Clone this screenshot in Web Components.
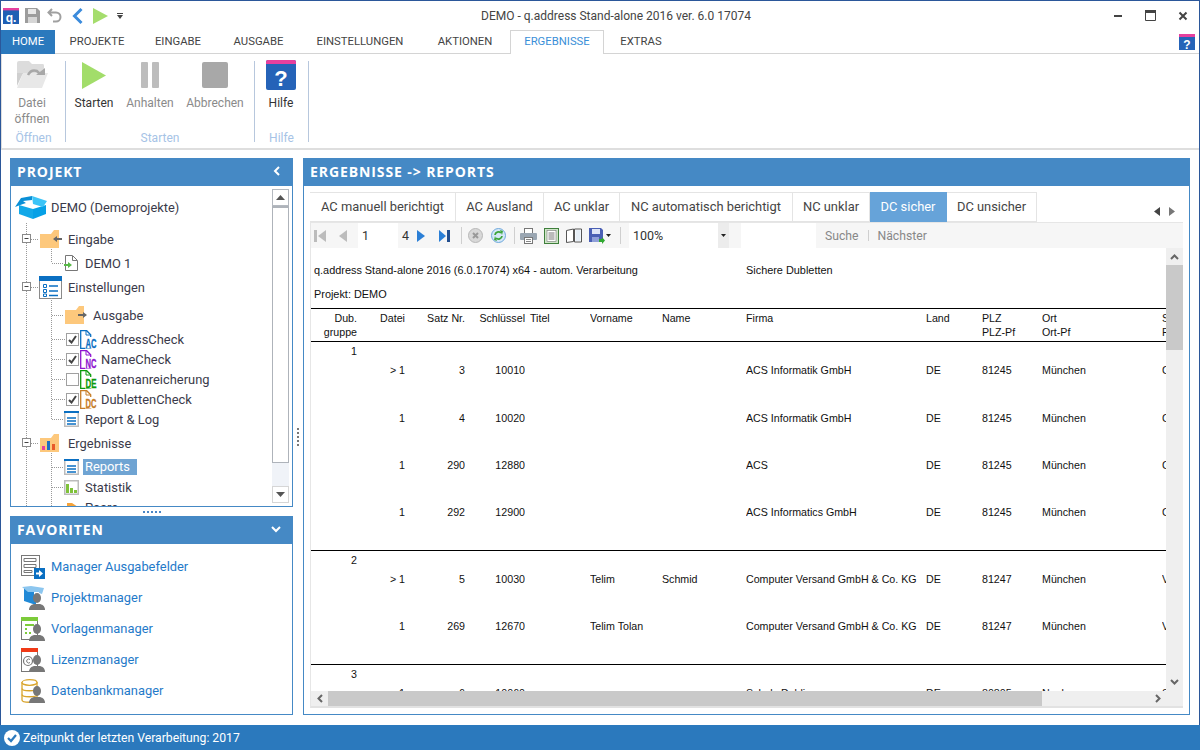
<!DOCTYPE html>
<html lang="de">
<head>
<meta charset="utf-8">
<title>DEMO - q.address</title>
<style>
html, body { margin: 0; padding: 0; background: #fff; }
body { width: 1200px; height: 750px; overflow: hidden; font-family: Roboto, "Liberation Sans", sans-serif; }
</style>
</head>
<body>
<q-window>
    <q-titlebar slot="top"></q-titlebar>
    <q-ribbon-tabs slot="top"></q-ribbon-tabs>
    <q-ribbon slot="top">
        <q-ribbon-group label="Öffnen" style="width:64px">
            <q-ribbon-btn icon="folderOpen" disabled style="width:60px">Datei<br>öffnen</q-ribbon-btn>
        </q-ribbon-group>
        <q-ribbon-group label="Starten" style="width:189px">
            <q-ribbon-btn icon="playBig" style="width:56px">Starten</q-ribbon-btn>
            <q-ribbon-btn icon="pauseBig" disabled style="width:56px">Anhalten</q-ribbon-btn>
            <q-ribbon-btn icon="stopBig" disabled style="width:74px">Abbrechen</q-ribbon-btn>
        </q-ribbon-group>
        <q-ribbon-group label="Hilfe" style="width:54px">
            <q-ribbon-btn icon="helpBig" style="width:52px">Hilfe</q-ribbon-btn>
        </q-ribbon-group>
    </q-ribbon>
    <q-workspace>
        <q-panel slot="project" heading="PROJEKT" arrow="left" style="height:349px">
            <q-tree>
                <q-tree-row icon="box" style="--x:4px;--mt:11px;--tw:36px">DEMO (Demoprojekte)</q-tree-row>
                <q-tree-row icon="folderIn" style="--x:29px;--mt:12px;--tw:28px">Eingabe</q-tree-row>
                <q-tree-row icon="docIn" style="--x:54px;--mt:4px;--tw:20px">DEMO 1</q-tree-row>
                <q-tree-row icon="settings" style="--x:28px;--mt:4px;--tw:29px">Einstellungen</q-tree-row>
                <q-tree-row icon="folderOut" style="--x:54px;--mt:8px;--tw:28px">Ausgabe</q-tree-row>
                <q-tree-row check="on" icon="docAC" style="--x:55px;--mt:4px;--tw:21px">AddressCheck</q-tree-row>
                <q-tree-row check="on" icon="docNC" style="--x:55px;--tw:21px">NameCheck</q-tree-row>
                <q-tree-row check="off" icon="docDE" style="--x:55px;--tw:21px">Datenanreicherung</q-tree-row>
                <q-tree-row check="on" icon="docDC" style="--x:55px;--tw:21px">DublettenCheck</q-tree-row>
                <q-tree-row icon="list" style="--x:53px;--tw:21px">Report &amp; Log</q-tree-row>
                <q-tree-row icon="folderChart" style="--x:29px;--mt:4px;--tw:28px">Ergebnisse</q-tree-row>
                <q-tree-row icon="list" selected style="--x:53px;--mt:4px;--tw:19px">Reports</q-tree-row>
                <q-tree-row icon="chart" style="--x:53px;--tw:21px">Statistik</q-tree-row>
                <q-tree-row icon="pie" style="--x:53px;--tw:21px">Paare</q-tree-row>
            </q-tree>
        </q-panel>
        <q-panel slot="favorites" heading="FAVORITEN" arrow="down" style="height:199px">
            <q-favorites>
                <q-fav-row icon="favFields">Manager Ausgabefelder</q-fav-row>
                <q-fav-row icon="favProject">Projektmanager</q-fav-row>
                <q-fav-row icon="favTemplate">Vorlagenmanager</q-fav-row>
                <q-fav-row icon="favLicense">Lizenzmanager</q-fav-row>
                <q-fav-row icon="favDb">Datenbankmanager</q-fav-row>
            </q-favorites>
        </q-panel>
        <q-panel slot="results" heading="ERGEBNISSE -&gt; REPORTS" style="height:557px">
            <q-report-view></q-report-view>
        </q-panel>
    </q-workspace>
    <q-statusbar slot="bottom">Zeitpunkt der letzten Verarbeitung: 2017</q-statusbar>
</q-window>

<script>
const person = (x, y) => `<g fill="#777" transform="translate(${x} ${y})"><ellipse cx="8" cy="5" rx="4" ry="5"/><path d="M0 17c0-4 3-6 6-6h4c3 0 6 2 6 6z"/></g>`;
const docShape = c => `<path fill="#fff" stroke="${c}" stroke-width="1.3" d="M.7.7h6l4 4v13.6H.7z"/><path fill="none" stroke="${c}" d="M6 1v4h4"/>`;
const docLabel = (c, t) => `<rect x="5" y="7" width="11.500" height="11.500" fill="#fff"/><text x="5.5" y="18" font-family="Liberation Sans" font-weight="700" font-size="12" fill="${c}" stroke="${c}" stroke-width=".3" textLength="11" lengthAdjust="spacingAndGlyphs">${t}</text>`;
const listLines = '<path stroke="#0a6fc2" stroke-width="1.4" d="M3 7h9M3 10h9M3 13h9"/>';

const ICONS = {
    logo: [16, 16, '<rect width="16" height="16" fill="#1f5fb4"/><rect width="16" height="2.4" fill="#e6409e"/><text x="8" y="13.5" text-anchor="middle" font-family="Liberation Sans" font-weight="700" font-size="12" fill="#fff">q.</text>'],
    save: [15, 15, '<path fill="#9c9c9c" d="M0 0h12l3 3v12H0z"/><rect x="3" y="1" width="8" height="5" fill="#e8e8e8"/><rect x="3" y="9" width="9" height="6" fill="#d6d6d6"/>'],
    undo: [15, 15, '<path fill="none" stroke="#a0a0a0" stroke-width="2" d="M5 1 1.500 4.500 5 8M2 4.500h7a4.500 4.500 0 0 1 0 9H6"/>'],
    back: [11, 16, '<path fill="none" stroke="#3b8bdc" stroke-width="3" d="M9.500 1 2.500 8l7 7"/>'],
    playSmall: [15, 16, '<path fill="#a5dd6d" d="M0 0l15 8L0 16z"/>'],
    qatMore: [6, 6, '<path fill="#444" d="M0 0h6v1H0zM0 2h6L3 6z"/>'],
    min: [8, 2, '<rect width="8" height="2" fill="#444"/>'],
    max: [11, 11, '<path fill="none" stroke="#444" d="M.5.500h10v10H.5z"/><rect width="11" height="3" fill="#444"/>'],
    close: [8, 8, '<path stroke="#444" stroke-width="2" d="M.5.500l7 7M7.500.500l-7 7"/>'],
    helpSmall: [16, 16, '<rect width="16" height="16" fill="#2563b8"/><rect width="16" height="3" fill="#e6409e"/><text x="8" y="14.500" text-anchor="middle" font-family="Liberation Sans" font-weight="700" font-size="12" fill="#fff">?</text>'],
    folderOpen: [32, 28, '<path fill="#dcdcdc" d="M1 2q0-2 2-2h10l3 3h11q1 0 1 2v8H1z"/><path fill="#e8e8e8" d="M7 12h25l-6 15H1z"/><path fill="#cfcfcf" d="M1 25 7 12H1z"/><path fill="none" stroke="#a8a8a8" stroke-width="2.500" d="M12 14q3-6 9-4l3 3"/><path fill="#a8a8a8" d="M20 14h9V7z"/>'],
    playBig: [24, 27, '<path fill="#a2dd6a" d="M0 0l24 13.500L0 27z"/>'],
    pauseBig: [18, 26, '<rect width="7" height="26" rx="1" fill="#bdbdbd"/><rect x="11" width="7" height="26" rx="1" fill="#bdbdbd"/>'],
    stopBig: [26, 26, '<rect width="26" height="26" rx="2" fill="#a8a8a8"/>'],
    helpBig: [30, 30, '<rect width="30" height="30" rx="2" fill="#2563b8"/><path fill="#e6409e" d="M2 0h26q2 0 2 2v2H0V2q0-2 2-2z"/><text x="15" y="26" text-anchor="middle" font-family="Liberation Sans" font-weight="700" font-size="22" fill="#fff">?</text>'],
    chevL: [8, 10, '<path fill="none" stroke="#fff" stroke-width="2" d="M6 1 2 5l4 4"/>'],
    chevD: [10, 8, '<path fill="none" stroke="#fff" stroke-width="2" d="M1 2l4 4 4-4"/>'],
    box: [32, 23, '<path fill="#0a8fd6" d="M0 11 6 2l11-2v5L8 8z"/><path fill="#fff" d="M8 5l9-1 12 4-11 4z"/><path fill="#12a8e8" d="M4 9l14 4v10L4 18z"/><path fill="#06a0e6" d="M18 13l13-4v9l-13 5z"/><path fill="#3cc4f7" d="M17 0l15 5-4 6-10-3z"/>'],
    folderIn: [23, 18, '<path fill="#fdc87c" d="M0 4h11l3-4h5v18H0z"/><path fill="#666" d="M13 9l4-3v2h5v2h-5v2z"/>'],
    folderOut: [23, 18, '<path fill="#fdc87c" d="M0 4h11l3-4h5v18H0z"/><path fill="#666" d="M22 9l-4-3v2h-5v2h5v2z"/>'],
    folderChart: [20, 18, '<path fill="#fdc87c" d="M0 4h11l3-4h5v18H0z"/><rect x="2" y="12" width="3" height="4" fill="#e8409e"/><rect x="7" y="7" width="3" height="9" fill="#1f6fc4"/><rect x="12" y="10" width="3" height="6" fill="#e85a2a"/>'],
    docIn: [13, 16, '<path fill="#fff" stroke="#777" d="M.5.500h7l5 5v10H.5z"/><path fill="none" stroke="#777" d="M7.500 1v4.500H12"/><path fill="#58b947" d="M-1 9h4V7l4 3-4 3v-2h-4z"/>'],
    settings: [23, 23, '<rect x=".5" y=".5" width="22" height="22" fill="#fff" stroke="#8a8a8a"/><rect width="23" height="5" fill="#0a6fc2"/><path fill="none" stroke="#0a6fc2" d="M4.500 8.500h3v3h-3zM4.500 13.500h3v3h-3zM4.500 18h3v2.500h-3z"/><path stroke="#0a6fc2" stroke-width="1.300" d="M10 10h9M10 15h9M10 19.500h9"/>'],
    docAC: [17, 19, docShape('#0a6fc2') + docLabel('#0a6fc2', 'AC')],
    docNC: [17, 19, docShape('#8f14cf') + docLabel('#8f14cf', 'NC')],
    docDE: [17, 19, docShape('#0b9a0b') + docLabel('#0b9a0b', 'DE')],
    docDC: [17, 19, docShape('#c77d27') + docLabel('#c77d27', 'DC')],
    list: [15, 16, '<rect x=".75" y=".75" width="13.500" height="14.500" fill="#fff" stroke="#bcbcbc" stroke-width="1.500"/><rect width="15" height="2" fill="#0a6fc2"/>' + listLines],
    chart: [15, 15, '<rect x=".75" y=".75" width="13.500" height="13.500" fill="#fff" stroke="#bcbcbc" stroke-width="1.500"/><rect x="2" y="4" width="3" height="9" fill="#7fc23a"/><rect x="6" y="8" width="3" height="5" fill="#7fc23a"/><rect x="10" y="10" width="3" height="3" fill="#7fc23a"/>'],
    pie: [15, 15, '<path fill="#1f7fd0" d="M0 15A7 7 0 0 1 7 8V4Q1 5 0 15z"/><path fill="#f5a33a" d="M3 3h5l6 4H3z"/>'],
    favFields: [24, 24, '<rect x=".5" y=".5" width="18" height="20" fill="#fff" stroke="#777"/><path fill="none" stroke="#777" d="M3 3.500h12v3H3zM3 9.500h12v3H3zM3 15.500h8v2H3z"/><rect x="13" y="13" width="11" height="11" fill="#0a6fc2"/><path fill="#fff" d="M15 17.500h3V15l4 3.500-4 3.500v-2.500h-3z"/>'],
    favProject: [24, 24, '<path fill="#2189d6" d="M3 2h12v17L3 15z"/><path fill="#8cc6ef" d="M1 1l9-1 13 2-2 6-6-2-8 0z"/><path fill="#fff" d="M13 6h5v6h-5z"/>' + person(8, 7)],
    favTemplate: [24, 24, '<rect x=".5" y=".5" width="16" height="22" fill="#fff" stroke="#777"/><rect width="17" height="4" fill="#7ccb3a"/><path fill="#7ccb3a" d="M4 7h9v2H4zM4 11h2v2H4zM4 15h2v2H4zM8 15h2v2H8z"/>' + person(8, 7)],
    favLicense: [24, 24, '<rect x=".5" y=".5" width="16" height="23" fill="#fff" stroke="#777"/><rect width="17" height="4" fill="#f03a17"/><circle cx="7" cy="13" r="4.500" fill="none" stroke="#777" stroke-width="1.200"/><path fill="none" stroke="#777" d="M9 11.500a2 2 0 1 0 0 3"/>' + person(8, 7)],
    favDb: [24, 24, '<g fill="#fff" stroke="#d9a52e" stroke-width="1.300"><path d="M1 3v18c0 3 15 3 15 0V3"/><ellipse cx="8.500" cy="3.500" rx="7.500" ry="2.800"/><path fill="none" d="M1 9.500c0 3 15 3 15 0M1 15.500c0 3 15 3 15 0"/></g>' + person(8, 7)],
    statusOk: [16, 16, '<circle cx="8" cy="8" r="8" fill="#fff"/><path fill="none" stroke="#2b79bd" stroke-width="2.200" d="M4 8l3 3 5-6"/>'],
    first: [12, 12, '<rect width="3" height="12" fill="#bcbcbc"/><path fill="#bcbcbc" d="M12 0v12L4 6z"/>'],
    prev: [8, 12, '<path fill="#bcbcbc" d="M8 0v12L0 6z"/>'],
    next: [8, 12, '<path fill="#2b7fd6" d="M0 0v12l8-6z"/>'],
    last: [11, 12, '<path fill="#2b7fd6" d="M0 0v12l7-6z"/><rect x="8" width="3" height="12" fill="#234f8f"/>'],
    stopRound: [15, 15, '<circle cx="7.500" cy="7.500" r="7" fill="#d8d8d8" stroke="#b8b8b8"/><path stroke="#999" stroke-width="2" d="M5 5l5 5M10 5l-5 5"/>'],
    refresh: [15, 15, '<circle cx="7.500" cy="7.500" r="7" fill="#d5e8f8" stroke="#6fa8dc"/><path fill="none" stroke="#3ea53a" stroke-width="1.800" d="M4 7a3.500 3.500 0 0 1 6-2M11 8a3.500 3.500 0 0 1-6 2"/><path fill="#3ea53a" d="M9 2l3 1-1 4zM6 13l-3-1 1-4z"/>'],
    print: [17, 16, '<rect x="4.500" y=".5" width="8" height="6" fill="#fff" stroke="#777"/><rect y="5" width="17" height="7" rx="1" fill="#9aa6b2"/><rect x="4.500" y="9.500" width="8" height="6" fill="#fff" stroke="#777"/><path stroke="#888" d="M6 11.500h5M6 13.500h5"/>'],
    page: [15, 16, '<rect x=".5" y=".5" width="14" height="15" fill="#cfe6c8" stroke="#3f7f3c"/><rect x="3" y="2.500" width="9" height="11" fill="#fff" stroke="#777" stroke-width=".6"/><path stroke="#777" d="M4.500 5h6M4.500 7h6M4.500 9h6M4.500 11h6"/>'],
    layout: [16, 15, '<path fill="#fff" stroke="#555" d="M.5 2.500 7.500 1v12.500l-7 1zM8.500 1h7v13h-7z"/><path fill="#e6eef6" d="M9.500 2h5v11h-5z"/>'],
    disk: [16, 16, '<path fill="#4a5fb4" d="M0 0h12l2 2v12H0z"/><rect x="3" y="1" width="8" height="5" fill="#dfe6f7"/><rect x="3" y="9" width="7" height="5" fill="#8f9fd8"/><path fill="#2fa82f" d="M10 11h3V9l3 3.500-3 3.500v-2h-3z"/>'],
    drop: [5, 3, '<path fill="#222" d="M0 0h5L2.500 3z"/>'],
    navL: [6, 9, '<path fill="#444" d="M6 0v9L0 4.500z"/>'],
    navR: [6, 9, '<path fill="#777" d="M0 0v9l6-4.500z"/>'],
    sbUp: [9, 5, '<path fill="#555" d="M0 5l4.500-5L9 5z"/>'],
    sbDown: [9, 5, '<path fill="#555" d="M0 0l4.500 5L9 0z"/>'],
    chevUp: [9, 6, '<path fill="none" stroke="#666" stroke-width="2" d="M1 5l3.500-3.500L8 5"/>'],
    chevDown: [9, 6, '<path fill="none" stroke="#666" stroke-width="2" d="M1 1l3.500 3.500L8 1"/>'],
    chevLeft: [6, 9, '<path fill="none" stroke="#666" stroke-width="2" d="M5 1 1.500 4.500 5 8"/>'],
    chevRight: [6, 9, '<path fill="none" stroke="#666" stroke-width="2" d="M1 1l3.500 3.500L1 8"/>']
};

class QIcon extends HTMLElement {
    connectedCallback(){
        const [w, h, body] = ICONS[this.getAttribute('name')];
        const root = this.shadowRoot || this.attachShadow({mode: 'open'});
        root.innerHTML = `<style>:host{display:block;flex:none;width:${w}px;height:${h}px}svg{display:block;overflow:visible}</style>
        <svg width="${w}" height="${h}" viewBox="0 0 ${w} ${h}">${body}</svg>`;
    }
}
customElements.define('q-icon', QIcon);

class QWindow extends HTMLElement {
    constructor(){
        super();
        this.attachShadow({mode: 'open'}).innerHTML = `
        <style>
        :host{display:flex;flex-direction:column;width:1200px;height:750px;box-sizing:border-box;
              font-family:Roboto,"Liberation Sans",sans-serif;color:#333;background:#fff}
        .frame{flex:1;display:flex;flex-direction:column;border:1px solid #2b579a;border-bottom:0;min-height:0}
        </style>
        <div class="frame"><slot name="top"></slot><slot></slot></div>
        <slot name="bottom"></slot>`;
    }
}
customElements.define('q-window', QWindow);

class QTitlebar extends HTMLElement {
    constructor(){
        super();
        this.attachShadow({mode: 'open'}).innerHTML = `
        <style>
        :host{display:flex;align-items:center;height:29px;position:relative;font-size:12px;color:#444}
        .qat{display:flex;align-items:center;padding-left:2px}
        .title{position:absolute;left:0;right:0;text-align:center;padding-left:32px;box-sizing:border-box;pointer-events:none}
        .ctl{margin-left:auto;display:flex;align-items:center}
        </style>
        <div class="qat">
            <q-icon name="logo"></q-icon>
            <q-icon name="save" style="margin-left:6px"></q-icon>
            <q-icon name="undo" style="margin-left:7px"></q-icon>
            <q-icon name="back" style="margin-left:10px"></q-icon>
            <q-icon name="playSmall" style="margin-left:10px"></q-icon>
            <q-icon name="qatMore" style="margin-left:9px"></q-icon>
        </div>
        <div class="title">DEMO - q.address Stand-alone 2016 ver. 6.0 17074</div>
        <div class="ctl">
            <q-icon name="min"></q-icon>
            <q-icon name="max" style="margin-left:23px"></q-icon>
            <q-icon name="close" style="margin-left:23px;margin-right:12px"></q-icon>
        </div>`;
    }
}
customElements.define('q-titlebar', QTitlebar);

class QRibbonTabs extends HTMLElement {
    constructor(){
        super();
        const tabs = [['HOME',54,'home'],['PROJEKTE',84],['EINGABE',78],['AUSGABE',83],['EINSTELLUNGEN',120],['AKTIONEN',90],['ERGEBNISSE',94,'active'],['EXTRAS',74]];
        this.attachShadow({mode: 'open'}).innerHTML = `
        <style>
        :host{display:flex;height:24px;font-size:11.300px;color:#444;border-bottom:1px solid #d4d4d4;box-sizing:border-box;position:relative}
        .tab{box-sizing:border-box;height:24px;line-height:24px;text-align:center;flex:none}
        .home{background:#2b79bd;color:#fff}
        .active{color:#3b8fd8;background:#fff;border:1px solid #d4d4d4;border-bottom:0;line-height:22px}
        q-icon{position:absolute;right:4px;top:4px}
        </style>
        ${tabs.map(t => `<div class="tab ${t[2]||''}" style="width:${t[1]}px">${t[0]}</div>`).join('')}
        <q-icon name="helpSmall"></q-icon>`;
    }
}
customElements.define('q-ribbon-tabs', QRibbonTabs);

class QRibbon extends HTMLElement {
    constructor(){
        super();
        this.attachShadow({mode: 'open'}).innerHTML = `
        <style>
        :host{display:flex;height:96px;box-sizing:border-box;border-bottom:2px solid #dedede;border-left:1px solid #dedede;padding-top:7px}
        </style><slot></slot>`;
    }
}
customElements.define('q-ribbon', QRibbon);

class QRibbonGroup extends HTMLElement {
    constructor(){
        super();
        this.attachShadow({mode: 'open'}).innerHTML = `
        <style>
        :host{display:flex;flex-direction:column;height:81px;box-sizing:border-box;border-right:1px solid #b7c7dd;flex:none}
        .btns{flex:1;display:flex;min-height:0}
        .label{height:16px;line-height:16px;text-align:center;font-size:12px;color:#a6c3e6;margin-bottom:-4px}
        </style>
        <div class="btns"><slot></slot></div>
        <div class="label"></div>`;
        this.shadowRoot.querySelector('.label').textContent = this.getAttribute('label');
    }
}
customElements.define('q-ribbon-group', QRibbonGroup);

class QRibbonBtn extends HTMLElement {
    connectedCallback(){
        if(this.shadowRoot) return;
        this.attachShadow({mode: 'open'}).innerHTML = `
        <style>
        :host{display:flex;flex-direction:column;align-items:center;flex:none;font-size:12px;line-height:16px;text-align:center;color:#333}
        :host([disabled]){color:#8a8a8a}
        .ic{height:30px;display:flex;align-items:center;justify-content:center;margin:-1px 0 5px}
        </style>
        <div class="ic"><q-icon name="${this.getAttribute('icon')}"></q-icon></div>
        <div><slot></slot></div>`;
    }
}
customElements.define('q-ribbon-btn', QRibbonBtn);

class QWorkspace extends HTMLElement {
    constructor(){
        super();
        this.attachShadow({mode: 'open'}).innerHTML = `
        <style>
        :host{flex:1;display:grid;grid-template-columns:283px 10px 887px;grid-template-rows:349px 9px 199px;
              padding:8px 0 0 9px;min-height:0;box-sizing:border-box}
        ::slotted([slot=project]){grid-column:1;grid-row:1}
        ::slotted([slot=favorites]){grid-column:1;grid-row:3}
        ::slotted([slot=results]){grid-column:3;grid-row:1 / 4}
        .hdots{grid-column:1;grid-row:2;display:flex;gap:2px;justify-content:center;align-items:center}
        .hdots i{width:2px;height:2px;background:#4a86c5;display:block}
        .vdots{grid-column:2;grid-row:1 / 4;display:flex;flex-direction:column;gap:2px;align-items:center;justify-content:flex-start;padding-top:270px}
        .vdots i{width:2px;height:2px;background:#777;display:block}
        </style>
        <slot name="project"></slot>
        <div class="hdots"><i></i><i></i><i></i><i></i><i></i></div>
        <slot name="favorites"></slot>
        <div class="vdots"><i></i><i></i><i></i><i></i><i></i></div>
        <slot name="results"></slot>`;
    }
}
customElements.define('q-workspace', QWorkspace);

class QPanel extends HTMLElement {
    connectedCallback(){
        if(this.shadowRoot) return;
        const arrow = this.getAttribute('arrow');
        const ic = arrow === 'left' ? 'chevL' : arrow === 'down' ? 'chevD' : '';
        this.attachShadow({mode: 'open'}).innerHTML = `
        <style>
        :host{display:flex;flex-direction:column;box-sizing:border-box;border:1px solid #4589c5;min-height:0}
        .head{height:27px;flex:none;box-sizing:border-box;padding:0 11px 3px 6px;background:#4589c5;color:#fff;font-family:"Open Sans",sans-serif;font-weight:700;font-size:14px;letter-spacing:.9px;display:flex;align-items:center;justify-content:space-between}
        .body{flex:1;min-height:0;display:flex;flex-direction:column}
        </style>
        <div class="head"><span>${this.getAttribute('heading').replace('>','&gt;')}</span>${ic ? `<q-icon name="${ic}"></q-icon>` : ''}</div>
        <div class="body"><slot></slot></div>`;
    }
}
customElements.define('q-panel', QPanel);

class QTree extends HTMLElement {
    constructor(){
        super();
        const v = (x, a, b) => `<path d="M${x}.5 ${a}V${b}"/>`;
        const h = (y, a, b) => `<path d="M${a} ${y}.5H${b}"/>`;
        const box = y => `<rect x="11.500" y="${y-4.5}" width="8" height="8" fill="#fff" stroke="#8a8a8a" stroke-dasharray="none"/><path stroke="#444" stroke-dasharray="none" d="M13.500 ${y-.5}h4"/>`;
        this.attachShadow({mode: 'open'}).innerHTML = `
        <style>
        :host{flex:1;display:flex;position:relative;min-height:0;overflow:hidden}
        .rows{flex:1;display:flex;flex-direction:column;min-width:0;overflow:hidden}
        .lines{position:absolute;left:0;top:1px;pointer-events:none}
        .scroll{position:absolute;left:261px;top:3px;width:17px;height:314px;display:flex;flex-direction:column;background:#f0f3f8}
        .btn{height:17px;flex:none;box-sizing:border-box;border:1px solid #b4b9c0;background:#fff;display:flex;align-items:center;justify-content:center}
        .btn.down{border-color:#d6d6d6;margin-top:auto}
        .thumb{height:257px;box-sizing:border-box;border:1px solid #aeb3ba;border-top-width:2px;background:#fff}
        </style>
        <div class="rows"><slot></slot></div>
        <svg class="lines" width="60" height="320" fill="none" stroke="#999" stroke-dasharray="1 1">
            <!-- coordinates are relative to the tree's top left corner -->
            ${v(15, 36, 320)}
            ${v(40, 62, 76)}${h(76, 41, 53)}
            ${v(40, 111, 232)}${h(128, 41, 53)}
            ${h(152, 41, 54)}${h(172, 41, 54)}${h(192, 41, 54)}${h(212, 41, 54)}${h(232, 41, 52)}
            ${v(40, 266, 320)}${h(280, 41, 52)}${h(300, 41, 52)}
            ${h(52, 20, 28)}${h(100, 20, 27)}${h(256, 20, 28)}
            ${box(52)}${box(100)}${box(256)}
        </svg>
        <div class="scroll">
            <div class="btn"><q-icon name="sbUp"></q-icon></div>
            <div class="thumb"></div>
            <div class="btn down"><q-icon name="sbDown"></q-icon></div>
        </div>`;
    }
}
customElements.define('q-tree', QTree);

class QTreeRow extends HTMLElement {
    connectedCallback(){
        if(this.shadowRoot) return;
        const chk = this.getAttribute('check');
        const box = chk ? `<span class="chk">${chk === 'on' ? '<svg width="9" height="9" viewBox="0 0 9 9"><path fill="none" stroke="#444" stroke-width="2" d="M1 5l2.500 2.500L8 1"/></svg>' : ''}</span>` : '';
        this.attachShadow({mode: 'open'}).innerHTML = `
        <style>
        :host{display:flex;align-items:center;flex:none;height:20px;margin-top:var(--mt,0);padding-left:var(--x,0);font-size:12.900px;color:#3a3a4a;white-space:nowrap}
        .ic{flex:none;display:flex;align-items:center;width:var(--tw);height:20px}
        .chk{flex:none;box-sizing:border-box;width:13px;height:13px;border:1px solid #a0a0a0;display:flex;align-items:center;justify-content:center;margin-right:1px;background:#fff}
        :host([selected]) .t{background:#6fa4d3;color:#fff;padding:0 7px 0 2px;line-height:16px}
        </style>
        ${box}<span class="ic"><q-icon name="${this.getAttribute('icon')}"></q-icon></span><span class="t"><slot></slot></span>`;
    }
}
customElements.define('q-tree-row', QTreeRow);

class QFavorites extends HTMLElement {
    constructor(){
        super();
        this.attachShadow({mode: 'open'}).innerHTML = `
        <style>:host{display:flex;flex-direction:column;padding:7px 0 0 10px}</style><slot></slot>`;
    }
}
customElements.define('q-favorites', QFavorites);

class QFavRow extends HTMLElement {
    connectedCallback(){
        if(this.shadowRoot) return;
        this.attachShadow({mode: 'open'}).innerHTML = `
        <style>
        :host{display:flex;align-items:center;height:31px;font-size:12.900px;color:#1f7ac9}
        q-icon{margin-right:6px}
        </style>
        <q-icon name="${this.getAttribute('icon')}"></q-icon><slot></slot>`;
    }
}
customElements.define('q-fav-row', QFavRow);

class QReportTabs extends HTMLElement {
    constructor(){
        super();
        const tabs = [['AC manuell berichtigt',146],['AC Ausland',88],['AC unklar',76],['NC automatisch berichtigt',173],['NC unklar',77],['DC sicher',77,'on'],['DC unsicher',90]];
        this.attachShadow({mode: 'open'}).innerHTML = `
        <style>
        :host{display:flex;height:30px;flex:none;font-size:12.900px;color:#444}
        .tab{flex:none;box-sizing:border-box;text-align:center;line-height:28px;border:1px solid #e4e4e4;border-left:0;background:#fff}
        .tab:first-child{border-left:1px solid #e4e4e4}
        .on{background:#66a3d9;color:#fff;border-color:#66a3d9}
        .nav{margin-left:auto;display:flex;align-items:center;gap:9px;padding:8px 8px 0 0}
        </style>
        ${tabs.map(t => `<div class="tab ${t[2]||''}" style="width:${t[1]}px">${t[0]}</div>`).join('')}
        <div class="nav"><q-icon name="navL"></q-icon><q-icon name="navR"></q-icon></div>`;
    }
}
customElements.define('q-report-tabs', QReportTabs);

class QReportToolbar extends HTMLElement {
    constructor(){
        super();
        const ic = (n, ml) => `<q-icon name="${n}" style="margin-left:${ml}px"></q-icon>`;
        const sep = ml => `<i class="sep" style="margin-left:${ml}px"></i>`;
        this.attachShadow({mode: 'open'}).innerHTML = `
        <style>
        :host{display:flex;align-items:center;height:26px;flex:none;background:#f6f6f6;font-size:12.500px;color:#333;border-top:1px solid #e6e6e6;box-sizing:border-box}
        .sep{display:block;width:1px;height:17px;background:#cfcfcf;flex:none}
        .input{flex:none;background:#fff;height:25px;line-height:25px;box-sizing:border-box}
        .combo{display:flex;justify-content:space-between;align-items:center}
        .dd{width:11px;height:25px;background:#ececec;display:flex;align-items:center;justify-content:center}
        .txt{color:#888;flex:none;font-size:12.200px}
        .num{flex:none;width:8px}
        </style>
        ${ic('first',3)}${ic('prev',13)}
        <div class="input" style="margin-left:11px;width:40px;padding-left:4px">1</div>
        <span class="num" style="margin-left:4px">4</span>
        ${ic('next',7)}${ic('last',14)}${sep(11)}
        ${ic('stopRound',6)}${ic('refresh',8)}${sep(8)}
        ${ic('print',5)}${ic('page',7)}${ic('layout',7)}${ic('disk',7)}${ic('drop',1)}${sep(9)}
        <div class="input combo" style="margin-left:8px;width:100px;padding-left:4px"><span>100%</span><span class="dd"><q-icon name="drop"></q-icon></span></div>
        <div class="input" style="margin-left:12px;width:75px"></div>
        <span class="txt" style="margin-left:9px">Suche</span>
        <i class="sep" style="margin-left:9px;height:11px"></i>
        <span class="txt" style="margin-left:9px">Nächster</span>`;
    }
}
customElements.define('q-report-toolbar', QReportToolbar);

class QReport extends HTMLElement {
    constructor(){
        super();
        const cols = '46px 48px 60px 60px 65px 72px 84px 180px 56px 60px 120px 4px';
        const row = (cells, h, cls) => `<div class="row ${cls||''}" style="${h ? `height:${h}px` : ''}">${cells.map(c => `<span>${c}</span>`).join('')}</div>`;
        const data = (datei, nr, key, titel, vor, name, firma, land, plz, ort, st, h) =>
            row(['', datei, nr, key, titel, vor, name, firma, land, plz, ort, st], h);
        const head = n => `<div class="ghead">${n}</div>`;
        this.attachShadow({mode: 'open'}).innerHTML = `
        <style>
        :host{display:block;overflow:hidden;font-family:"Liberation Sans",Arial,sans-serif;font-size:10.670px;line-height:14px;color:#111;background:#fff;min-height:0;min-width:0}
        .top{display:flex;padding-top:15px;font-size:10.900px}
        .top span:first-child{width:435px;padding-left:3px;box-sizing:border-box;white-space:nowrap}
        .proj{padding:10px 0 7px 3px;font-size:10.900px}
        .row{display:grid;grid-template-columns:${cols};white-space:nowrap}
        .row span{overflow:hidden}
        .row span:nth-child(-n+4){text-align:right}
        .row span:nth-child(5){padding-left:5px}
        .hd{border-top:1px solid #000;border-bottom:1px solid #000;padding:2px 0}
        .group + .group{border-top:1px solid #000}
        .ghead{height:21px;line-height:18px;width:46px;text-align:right}
        </style>
        <div class="top"><span>q.address Stand-alone 2016 (6.0.17074) x64 - autom. Verarbeitung</span><span>Sichere Dubletten</span></div>
        <div class="proj">Projekt: DEMO</div>
        <div class="hd">
            ${row(['Dub.','Datei','Satz Nr.','Schlüssel','Titel','Vorname','Name','Firma','Land','PLZ','Ort','S'])}
            ${row(['gruppe','','','','','','','','','PLZ-Pf','Ort-Pf','P'])}
        </div>
        <div class="group">${head(1)}
            ${data('&gt; 1',3,10010,'','','','ACS Informatik GmbH','DE',81245,'München','C',48)}
            ${data(1,4,10020,'','','','ACS Informatik GmbH','DE',81245,'München','C',47)}
            ${data(1,290,12880,'','','','ACS','DE',81245,'München','C',47)}
            ${data(1,292,12900,'','','','ACS Informatics GmbH','DE',81245,'München','C',45)}
        </div>
        <div class="group">${head(2)}
            ${data('&gt; 1',5,10030,'','Telim','Schmid','Computer Versand GmbH &amp; Co. KG','DE',81247,'München','V',47)}
            ${data(1,269,12670,'','Telim Tolan','','Computer Versand GmbH &amp; Co. KG','DE',81247,'München','V',45)}
        </div>
        <div class="group">${head(3)}
            ${data(1,6,10060,'','','','Schulz Dublin','DE',80805,'Neuburg','S',47)}
        </div>`;
    }
}
customElements.define('q-report', QReport);

class QReportView extends HTMLElement {
    constructor(){
        super();
        this.attachShadow({mode: 'open'}).innerHTML = `
        <style>
        :host{flex:1;display:flex;flex-direction:column;min-height:0;padding:6px}
        .frame{flex:1;display:flex;flex-direction:column;min-height:0;border-left:1px solid #e6e6e6;border-bottom:2px solid #e2e2e2}
        .body{flex:1;min-height:0;display:grid;grid-template-columns:855px 17px;grid-template-rows:443px 15px}
        .vs,.hs{background:#efefef;display:flex}
        .vs{flex-direction:column;align-items:center;grid-row:1;grid-column:2}
        .vs .up{height:17px;display:flex;align-items:center}
        .vs .th{width:100%;height:85px;background:#c9c9c9}
        .vs .dn{margin-top:auto;height:17px;display:flex;align-items:center;margin-bottom:1px}
        .hs{grid-row:2;grid-column:1;align-items:stretch}
        .hs .l{width:17px;display:flex;align-items:center;justify-content:center}
        .hs .th{width:714px;background:#c9c9c9}
        .hs .r{margin-left:auto;width:17px;display:flex;align-items:center;justify-content:center}
        .corner{background:#efefef}
        </style>
        <q-report-tabs></q-report-tabs>
        <div class="frame">
            <q-report-toolbar></q-report-toolbar>
            <div class="body">
                <q-report></q-report>
                <div class="vs"><div class="up"><q-icon name="chevUp"></q-icon></div><div class="th"></div><div class="dn"><q-icon name="chevDown"></q-icon></div></div>
                <div class="hs"><div class="l"><q-icon name="chevLeft"></q-icon></div><div class="th"></div><div class="r"><q-icon name="chevRight"></q-icon></div></div>
                <div class="corner"></div>
            </div>
        </div>`;
    }
}
customElements.define('q-report-view', QReportView);

class QStatusbar extends HTMLElement {
    constructor(){
        super();
        this.attachShadow({mode: 'open'}).innerHTML = `
        <style>
        :host{display:flex;align-items:center;flex:none;height:25px;background:#2b79bd;color:#fff;font-size:12.200px;padding-left:4px}
        q-icon{margin-right:3px}
        </style>
        <q-icon name="statusOk"></q-icon><slot></slot>`;
    }
}
customElements.define('q-statusbar', QStatusbar);
</script>
</body>
</html>
